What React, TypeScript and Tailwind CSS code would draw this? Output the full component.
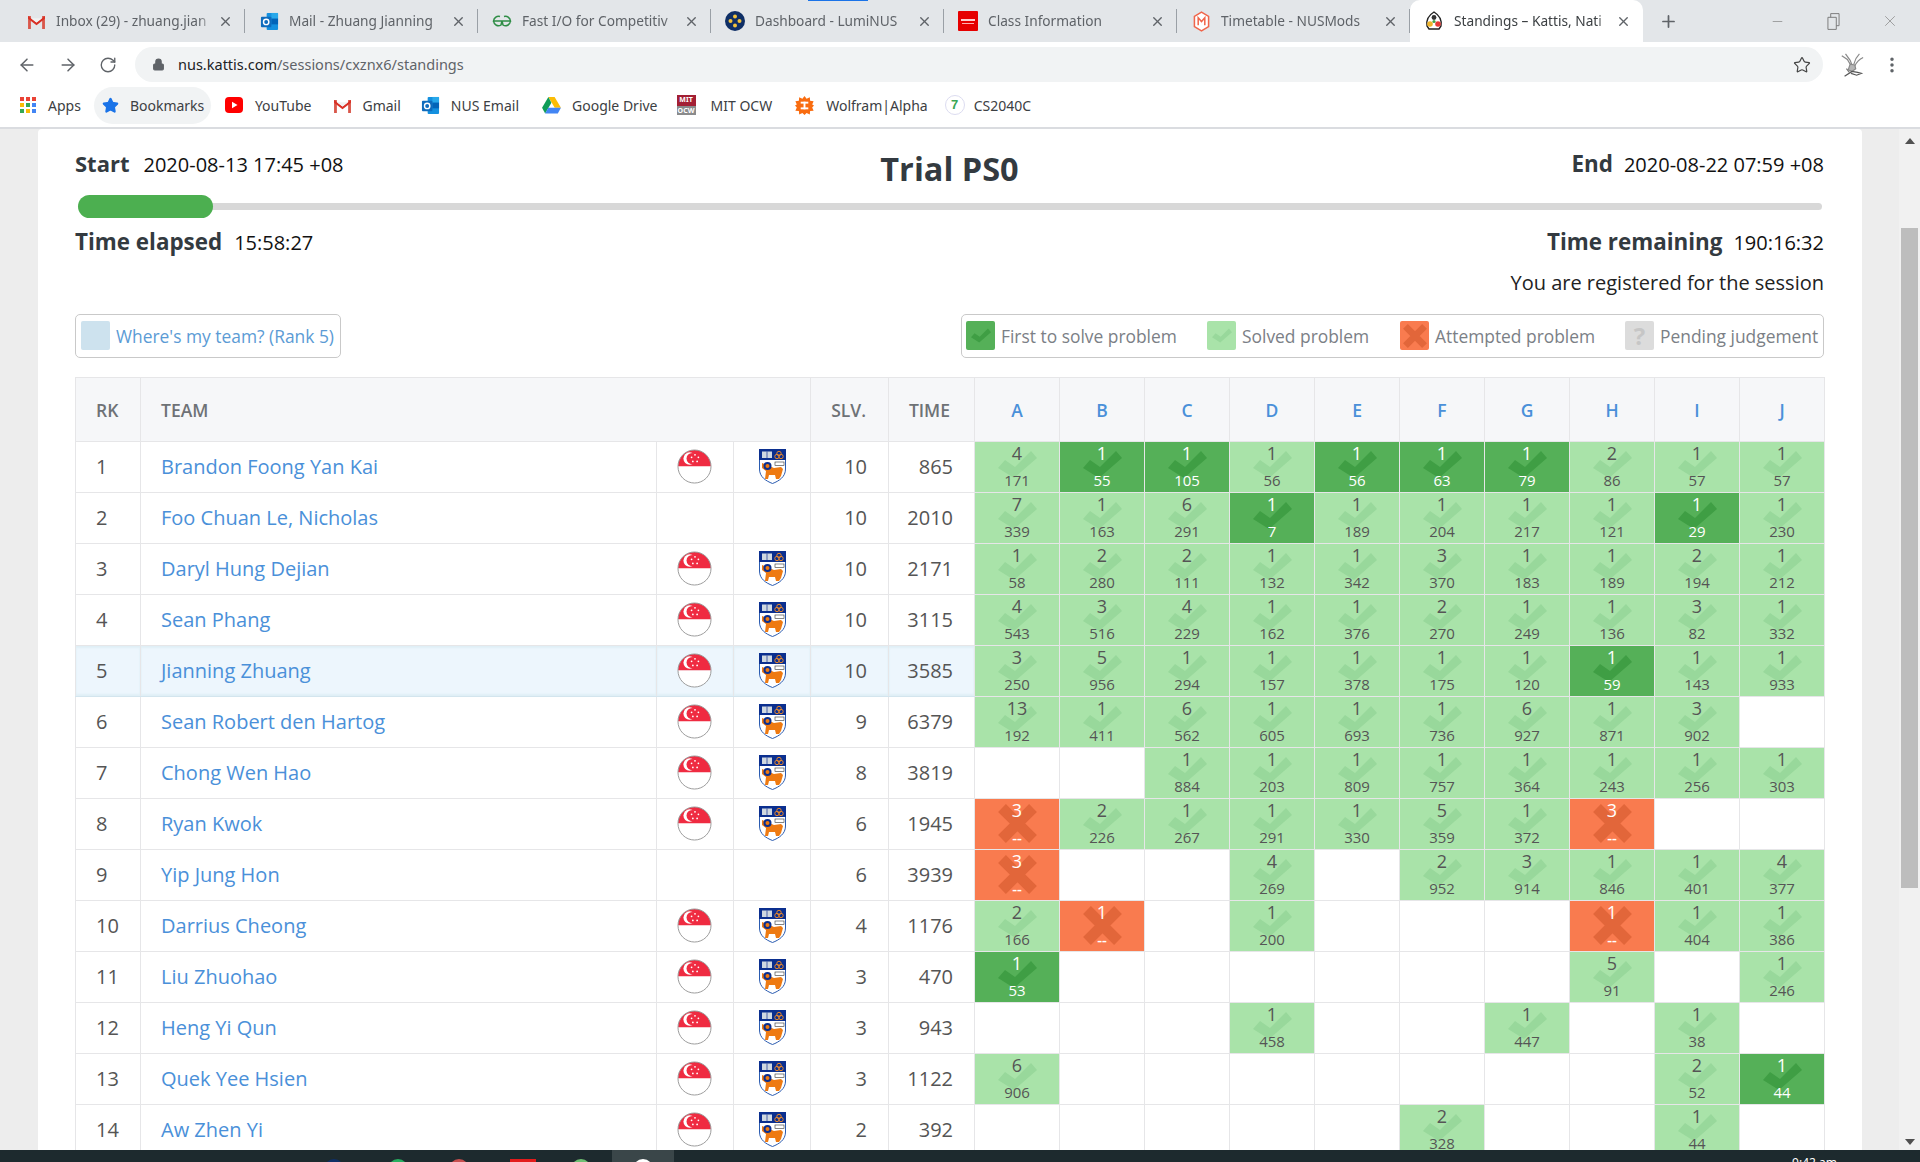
import { ArrowLeft, ArrowRight, RotateCw, Lock, Star, Plus, X, Minus, MoreVertical } from 'lucide-react';

const FONT = "font-['Open_Sans',sans-serif]";
const COLS = ['A', 'B', 'C', 'D', 'E', 'F', 'G', 'H', 'I', 'J'];

// '' = not tried, 'a/b' = solved, '*a/b' = first, 'x3' = attempted
const ROWS: [number, string, boolean, number, number, string][] = [
  [1, 'Brandon Foong Yan Kai', true, 10, 865, '4/171 *1/55 *1/105 1/56 *1/56 *1/63 *1/79 2/86 1/57 1/57'],
  [2, 'Foo Chuan Le, Nicholas', false, 10, 2010, '7/339 1/163 6/291 *1/7 1/189 1/204 1/217 1/121 *1/29 1/230'],
  [3, 'Daryl Hung Dejian', true, 10, 2171, '1/58 2/280 2/111 1/132 1/342 3/370 1/183 1/189 2/194 1/212'],
  [4, 'Sean Phang', true, 10, 3115, '4/543 3/516 4/229 1/162 1/376 2/270 1/249 1/136 3/82 1/332'],
  [5, 'Jianning Zhuang', true, 10, 3585, '3/250 5/956 1/294 1/157 1/378 1/175 1/120 *1/59 1/143 1/933'],
  [6, 'Sean Robert den Hartog', true, 9, 6379, '13/192 1/411 6/562 1/605 1/693 1/736 6/927 1/871 3/902 -'],
  [7, 'Chong Wen Hao', true, 8, 3819, '- - 1/884 1/203 1/809 1/757 1/364 1/243 1/256 1/303'],
  [8, 'Ryan Kwok', true, 6, 1945, 'x3 2/226 1/267 1/291 1/330 5/359 1/372 x3 - -'],
  [9, 'Yip Jung Hon', false, 6, 3939, 'x3 - - 4/269 - 2/952 3/914 1/846 1/401 4/377'],
  [10, 'Darrius Cheong', true, 4, 1176, '2/166 x1 - 1/200 - - - x1 1/404 1/386'],
  [11, 'Liu Zhuohao', true, 3, 470, '*1/53 - - - - - - 5/91 - 1/246'],
  [12, 'Heng Yi Qun', true, 3, 943, '- - - 1/458 - - 1/447 - 1/38 -'],
  [13, 'Quek Yee Hsien', true, 3, 1122, '6/906 - - - - - - - 2/52 *1/44'],
  [14, 'Aw Zhen Yi', true, 2, 392, '- - - - - 2/328 - - 1/44 -'],
];

function CheckMark({ className }: { className: string }) {
  return (
    <svg viewBox="0 0 39 27" className={className}>
      <polygon points="0,17 7,9 17,16 33,0 39,7 16,27" fill="currentColor" />
    </svg>
  );
}

function CrossMark({ className }: { className: string }) {
  return (
    <svg viewBox="0 0 39 39" className={className}>
      <path d="M4 4L35 35M35 4L4 35" stroke="currentColor" strokeWidth="11" fill="none" />
    </svg>
  );
}

function Flag() {
  return (
    <svg viewBox="0 0 36 36" className="w-[35px] h-[35px] ml-[20px] block">
      <path d="M1 18a17 17 0 0 1 34 0z" fill="#ef2b41" />
      <path d="M1 18a17 17 0 0 0 34 0z" fill="#fff" />
      <circle cx="18" cy="18" r="17" fill="none" stroke="#9a9a9a" strokeWidth="1" />
      <circle cx="13" cy="9.8" r="6.4" fill="#fff" />
      <circle cx="15.6" cy="9.8" r="5.8" fill="#ef2b41" />
      <g fill="#fff">
        <circle cx="18.5" cy="6" r="0.9" />
        <circle cx="22" cy="8.6" r="0.9" />
        <circle cx="20.7" cy="12.8" r="0.9" />
        <circle cx="16.3" cy="12.8" r="0.9" />
        <circle cx="15" cy="8.6" r="0.9" />
      </g>
    </svg>
  );
}

function Crest() {
  return (
    <svg viewBox="0 0 27 35" className="w-[27px] h-[35px] mx-auto block">
      <path d="M0.5 0.5H26.5V20C26.5 28 20 32 13.5 34.5C7 32 0.5 28 0.5 20Z" fill="#fff" stroke="#2a5bb0" strokeWidth="1" />
      <rect x="0" y="0" width="27" height="11" fill="#0b2f8f" />
      <rect x="3" y="2.5" width="10" height="6.5" fill="#cfd8e0" />
      <path d="M8 2.5V9" stroke="#0b2f8f" strokeWidth="0.7" />
      <circle cx="20" cy="4.5" r="2.2" fill="none" stroke="#e8862a" strokeWidth="1" />
      <circle cx="18" cy="7.5" r="2.2" fill="none" stroke="#e8862a" strokeWidth="1" />
      <circle cx="22" cy="7.5" r="2.2" fill="none" stroke="#e8862a" strokeWidth="1" />
      <path d="M3 14L8 16L15 19L22 18L24 20L22 27L20 30H17L16 26H10L9 30H6L7 22L3 19Z" fill="#ee7a12" />
      <circle cx="8.5" cy="17" r="4" fill="#0b2f8f" />
      <circle cx="8.5" cy="17" r="2" fill="#ee7a12" />
      <rect x="16" y="13" width="9" height="3.5" fill="#fff" stroke="#333" strokeWidth="0.6" />
    </svg>
  );
}

function Cell({ value }: { value: string }) {
  if (value === '-') return <td className="p-0 border border-[#e6e6e8]" />;
  const attempted = value[0] === 'x';
  const first = value[0] === '*';
  const [tries, time] = attempted ? [value.slice(1), '--'] : value.replace('*', '').split('/');
  const bg = attempted ? 'bg-[#f97b4f]' : first ? 'bg-[#55b058]' : 'bg-[#a9e3a9]';
  const text = attempted || first ? 'text-white' : 'text-[#555555]';
  return (
    <td className={`p-0 border border-[#e6e6e8] ${bg}`}>
      <div className={`relative h-[50px] flex flex-col items-center ${text}`}>
        <div className="absolute inset-0 flex items-center justify-center">
          {attempted ? (
            <CrossMark className="w-[39px] h-[39px] text-[#e2663a]" />
          ) : (
            <CheckMark className={`w-[39px] h-[27px] mb-[4px] ${first ? 'text-[#3f9e44]' : 'text-[#98d89b]'}`} />
          )}
        </div>
        <span className="relative text-[18px] leading-[24px] mt-[-1px]">{tries}</span>
        <span className={`relative text-[15px] leading-[20px] mt-[5px] ${attempted ? 'font-semibold' : ''}`}>{time}</span>
      </div>
    </td>
  );
}

function Row({ rank, name, flags, solved, time, cells }: { rank: number; name: string; flags: boolean; solved: number; time: number; cells: string }) {
  const mine = rank === 5;
  const base = `p-0 border text-[20px] ${mine ? 'bg-[#edf6fd] border-[#e6e6e8] border-y-[#d3e5ee] shadow-[inset_0_2px_2px_#e0eff6,inset_0_-2px_2px_#e0eff6]' : 'border-[#e6e6e8]'}`;
  return (
    <tr className="h-[51px]">
      <td className={`${base} pl-[20px] text-[#555555]`}>{rank}</td>
      <td className={`${base} pl-[20px] text-[#4a90d9]`}>{name}</td>
      <td className={base}>{flags && <Flag />}</td>
      <td className={base}>{flags && <Crest />}</td>
      <td className={`${base} text-right pr-[21px] text-[#555555]`}>{solved}</td>
      <td className={`${base} text-right pr-[21px] text-[#555555]`}>{time}</td>
      {cells.split(' ').map((c, i) => (
        <Cell key={i} value={c} />
      ))}
    </tr>
  );
}

function Standings() {
  const head = 'p-0 pt-[3px] border border-[#e6e6e8] text-[17.5px] font-semibold text-[#6e7276]';
  return (
    <table className="w-[1749px] table-fixed border-collapse rounded-t-[4px]">
      <colgroup>
        <col className="w-[65px]" />
        <col className="w-[516px]" />
        <col className="w-[77px]" />
        <col className="w-[77px]" />
        <col className="w-[78px]" />
        <col className="w-[86px]" />
        {COLS.map((c) => (
          <col key={c} className="w-[85px]" />
        ))}
      </colgroup>
      <thead>
        <tr className="h-[64px] bg-[#f6f7f9]">
          <th className={`${head} text-left pl-[20px]`}>RK</th>
          <th colSpan={3} className={`${head} text-left pl-[20px]`}>TEAM</th>
          <th className={`${head} text-right pr-[22px]`}>SLV.</th>
          <th className={`${head} text-right pr-[24px]`}>TIME</th>
          {COLS.map((c) => (
            <th key={c} className="p-0 pt-[3px] border border-[#e6e6e8] text-[17.5px] font-semibold text-[#4a90d9]">{c}</th>
          ))}
        </tr>
      </thead>
      <tbody>
        {ROWS.map(([rank, name, flags, solved, time, cells]) => (
          <Row key={rank} rank={rank} name={name} flags={flags} solved={solved} time={time} cells={cells} />
        ))}
      </tbody>
    </table>
  );
}

function Swatch({ className, children }: { className: string; children?: React.ReactNode }) {
  return <div className={`w-[29px] h-[29px] rounded-[2px] flex items-center justify-center shrink-0 ${className}`}>{children}</div>;
}

function SessionHeader() {
  return (
    <>
      <div className="flex items-center justify-between h-[60px] pt-[9px] relative">
        <div className="flex items-baseline gap-[14px] text-[#111]">
          <b className="text-[22px] text-[#333a40]">Start</b>
          <span className="text-[20px]">2020-08-13 17:45 +08</span>
        </div>
        <h1 className="absolute left-0 right-0 top-[16px] text-center text-[32.5px] font-bold text-[#333a40]">Trial PS0</h1>
        <div className="flex items-baseline gap-[11px] text-[#111]">
          <b className="text-[22.4px] text-[#333a40]">End</b>
          <span className="text-[20px]">2020-08-22 07:59 +08</span>
        </div>
      </div>
      <div className="relative h-[7px] mx-[3px] mt-[14px] mr-[2px] bg-[#d8d8d8] rounded-full">
        <div className="absolute left-0 top-[-8px] h-[23px] w-[135px] bg-[#4caf50] rounded-full" />
      </div>
      <div className="flex items-baseline justify-between mt-[15px]">
        <div className="flex items-baseline gap-[12px] text-[#111]">
          <b className="text-[22.4px] text-[#333a40]">Time elapsed</b>
          <span className="text-[20px]">15:58:27</span>
        </div>
        <div className="flex items-baseline gap-[11px] text-[#111]">
          <b className="text-[22.4px] text-[#333a40]">Time remaining</b>
          <span className="text-[20px]">190:16:32</span>
        </div>
      </div>
      <p className="text-right text-[20px] text-[#222] mt-[10px] leading-[28px]">You are registered for the session</p>
    </>
  );
}

function Legend() {
  const label = 'text-[17.4px] text-[#7b8086] ml-[6px]';
  return (
    <div className="flex justify-between mt-[17px] mb-[19px]">
      <div className="flex items-center h-[44px] w-[266px] border border-[#c9c9c9] rounded-[5px] px-[5px]">
        <Swatch className="bg-[#cde2ee]" />
        <span className="text-[17.4px] text-[#5b9bd5] ml-[6px] whitespace-nowrap">Where's my team? (Rank 5)</span>
      </div>
      <div className="flex items-center h-[44px] w-[863px] border border-[#c9c9c9] rounded-[5px] pl-[4px]">
        <Swatch className="bg-[#55b058]"><CheckMark className="w-[20px] h-[15px] text-[#3f9e44]" /></Swatch>
        <span className={`${label} w-[206px]`}>First to solve problem</span>
        <Swatch className="bg-[#a9e3a9]"><CheckMark className="w-[20px] h-[15px] text-[#98d89b]" /></Swatch>
        <span className={`${label} w-[158px]`}>Solved problem</span>
        <Swatch className="bg-[#f97b4f]"><CrossMark className="w-[24px] h-[24px] text-[#e2663a]" /></Swatch>
        <span className={`${label} w-[190px]`}>Attempted problem</span>
        <Swatch className="bg-[#dcdcdc]"><span className="text-[24px] font-bold text-[#c6c6c6] leading-none">?</span></Swatch>
        <span className={`${label} whitespace-nowrap`}>Pending judgement</span>
      </div>
    </div>
  );
}

function GmailIcon() {
  return (
    <svg viewBox="0 0 20 16" className="w-[19px] h-[15px]">
      <path d="M1 16V2h3v14zM16 16V2h3v14z" fill="#d9574a" />
      <path d="M1 2l9 7 9-7v3l-9 7-9-7z" fill="#d93025" />
      <path d="M4 4.5l6 4.5 6-4.5" fill="#f1f1f1" />
    </svg>
  );
}

function OutlookIcon() {
  return (
    <svg viewBox="0 0 20 20" className="w-[19px] h-[19px]">
      <rect x="7" y="1" width="12" height="18" rx="1" fill="#1490df" />
      <rect x="12" y="1" width="7" height="6" fill="#28a8ea" />
      <rect x="12" y="7" width="7" height="6" fill="#0364b8" />
      <rect x="1" y="5" width="11" height="11" rx="1" fill="#0f6cbd" />
      <circle cx="6.5" cy="10.5" r="2.8" fill="none" stroke="#fff" strokeWidth="1.5" />
    </svg>
  );
}

function GfgIcon() {
  return (
    <svg viewBox="0 0 20 14" className="w-[20px] h-[14px]" fill="none" stroke="#2f8d46" strokeWidth="1.5">
      <path d="M10 7H1.5C2 3.5 5 1.5 8 2.5M1.5 7C2 11 6 13 9 11L10 7" />
      <path d="M10 7h8.5C18 3.5 15 1.5 12 2.5M18.5 7C18 11 14 13 11 11L10 7" />
    </svg>
  );
}

function LuminusIcon() {
  return (
    <svg viewBox="0 0 20 20" className="w-[20px] h-[20px]">
      <circle cx="10" cy="10" r="10" fill="#0f2f66" />
      <circle cx="10" cy="5.5" r="2" fill="#f3c33c" />
      <circle cx="5.5" cy="10" r="2" fill="#f3c33c" />
      <circle cx="14.5" cy="10" r="2" fill="#f3c33c" />
      <circle cx="10" cy="14.5" r="2" fill="#f3c33c" />
    </svg>
  );
}

function OracleIcon() {
  return (
    <div className="w-[20px] h-[20px] bg-[#e60000] rounded-[1px] flex flex-col items-center justify-center">
      <div className="w-[14px] h-[2px] bg-[#ffd0d0]" />
      <div className="w-[12px] h-[1px] bg-[#ffb0b0] mt-[2px]" />
    </div>
  );
}

function NusModsIcon() {
  return (
    <svg viewBox="0 0 18 22" className="w-[17px] h-[21px]">
      <path d="M9 1l7.5 4.5v11L9 21l-7.5-4.5v-11z" fill="#fff" stroke="#f0654a" strokeWidth="1.6" />
      <path d="M5.5 15V7L9 11l3.5-4v8" fill="none" stroke="#f0654a" strokeWidth="1.6" />
    </svg>
  );
}

function KattisIcon() {
  return (
    <svg viewBox="0 0 20 20" className="w-[20px] h-[20px]">
      <path d="M10 1C5 4 2 9 3 15l2 3h10l2-3c1-6-2-11-7-14z" fill="#fff" stroke="#222" strokeWidth="1.4" />
      <circle cx="10" cy="6.5" r="2.4" fill="#333" />
      <circle cx="6" cy="13" r="2.8" fill="#f0b429" />
      <circle cx="14" cy="13" r="2.8" fill="#e53935" />
      <circle cx="10" cy="10.5" r="1.6" fill="#43a047" />
    </svg>
  );
}

function AppsIcon() {
  const dots = ['#ea4335', '#ea4335', '#ea4335', '#fbbc05', '#34a853', '#4285f4', '#34a853', '#fbbc05', '#4285f4'];
  return (
    <div className="grid grid-cols-3 gap-[2px] w-[16px]">
      {dots.map((c, i) => (
        <svg key={i} viewBox="0 0 4 4" className="w-[4px] h-[4px]"><rect width="4" height="4" fill={c} /></svg>
      ))}
    </div>
  );
}

function YoutubeIcon() {
  return (
    <svg viewBox="0 0 18 16" className="w-[18px] h-[16px]">
      <rect width="18" height="16" rx="4" y="0" fill="#f00" />
      <path d="M7 4.8L12.5 8 7 11.2z" fill="#fff" />
    </svg>
  );
}

function DriveIcon() {
  return (
    <svg viewBox="0 0 20 18" className="w-[19px] h-[17px]">
      <path d="M6.7 0h6.6L20 11.5h-6.6z" fill="#fbbc05" />
      <path d="M6.7 0L0 11.5l3.3 6 6.6-11.5z" fill="#0f9d58" />
      <path d="M6.6 11.5H20l-3.3 6H3.3z" fill="#4285f4" />
    </svg>
  );
}

function MitIcon() {
  return (
    <div className="w-[19px] h-[20px] flex flex-col text-[7px] font-bold leading-[9px] text-center">
      <span className="bg-[#a31f34] text-white h-[11px]">MIT</span>
      <span className="bg-[#8a8b8c] text-white h-[9px]">OCW</span>
    </div>
  );
}

function WolframIcon() {
  return (
    <svg viewBox="0 0 20 20" className="w-[19px] h-[19px]">
      <path d="M10 0l2.2 3 3.4-1.6.3 3.7 3.7.3L18.1 9l1.9 1-1.9 2 1.5 3.6-3.7.3-.3 3.7-3.4-1.6L10 20l-2.2-2-3.4 1.6-.3-3.7-3.7-.3L1.9 12 0 10l1.9-1L.4 5.4l3.7-.3.3-3.7 3.4 1.6z" fill="#f96c10" />
      <rect x="6" y="6" width="8" height="2" fill="#fff" />
      <rect x="6" y="12" width="8" height="2" fill="#fff" />
      <rect x="9" y="6" width="2" height="8" fill="#fff" />
    </svg>
  );
}

function SevenIcon() {
  return (
    <div className="w-[20px] h-[20px] rounded-full border border-[#dcdcf0] bg-white flex items-center justify-center text-[13px] font-bold text-[#3aa655] font-['Liberation_Sans',sans-serif]">7</div>
  );
}

function EagleIcon() {
  return (
    <svg viewBox="0 0 28 28" className="w-[26px] h-[26px]" fill="none" stroke="#8a8a8a" strokeWidth="1.3">
      <path d="M3 4l6 4 3 5M7 2l5 7 2 5M22 2c-3 3-5 7-6 11M26 6c-4 2-7 5-9 9" />
      <path d="M12 13l5 1 1 4-4 3-4-2z" fill="#b5b5b5" />
      <path d="M6 26l8-5 6 1 4 1-5 2-6-2" stroke="#555" />
      <path d="M8 18l4 5" stroke="#777" />
    </svg>
  );
}

function Tab({ title, icon, active }: { title: string; icon: React.ReactNode; active?: boolean }) {
  return (
    <div className={`relative w-[233px] h-[42px] shrink-0 flex items-center pl-[14px] pr-[12px] ${active ? 'bg-white rounded-t-[10px] text-[#3c4043]' : 'text-[#5f6368]'}`}>
      <div className="w-[20px] flex justify-center shrink-0">{icon}</div>
      <span className="ml-[10px] w-[158px] pt-[1px] text-[13.7px] whitespace-nowrap overflow-hidden [mask-image:linear-gradient(to_right,black_90%,transparent)]">{title}</span>
      <X className="ml-auto w-[15px] h-[15px] text-[#5f6368]" strokeWidth={2.2} />
      {!active && <div className="absolute right-0 top-[9px] h-[24px] w-px bg-[#9aa0a6]" />}
    </div>
  );
}

function BookmarkItem({ icon, label, className }: { icon: React.ReactNode; label: string; className: string }) {
  return (
    <div className={`flex items-center h-[37px] whitespace-nowrap ${className}`}>
      {icon}
      <span className="text-[14px] text-[#3c4043]">{label}</span>
    </div>
  );
}

function BrowserChrome() {
  return (
    <div className="shrink-0 relative font-['Noto_Sans',sans-serif]">
      <div className="absolute left-[808px] top-0 w-[60px] h-[1px] bg-[#1a73e8]" />
      <div className="h-[42px] bg-[#e3e6e9] flex pl-[12px] items-center">
        <Tab title="Inbox (29) - zhuang.jian" icon={<GmailIcon />} />
        <Tab title="Mail - Zhuang Jianning" icon={<OutlookIcon />} />
        <Tab title="Fast I/O for Competitiv" icon={<GfgIcon />} />
        <Tab title="Dashboard - LumiNUS" icon={<LuminusIcon />} />
        <Tab title="Class Information" icon={<OracleIcon />} />
        <Tab title="Timetable - NUSMods" icon={<NusModsIcon />} />
        <Tab title="Standings – Kattis, Nati" icon={<KattisIcon />} active />
        <Plus className="ml-[16px] w-[19px] h-[19px] text-[#5f6368]" strokeWidth={2.2} />
        <Minus className="ml-[92px] w-[15px] h-[15px] text-[#777]" strokeWidth={1} />
        <svg viewBox="0 0 14 18" className="ml-[42px] w-[13px] h-[17px] text-[#777]" fill="none" stroke="currentColor">
          <path d="M1 4.5h9v13H1zM4 4.5V.5h9v13h-3" />
        </svg>
        <X className="ml-[41px] w-[18px] h-[18px] text-[#888]" strokeWidth={1} />
      </div>
      <div className="h-[43px] pt-[2px] bg-white flex items-center">
        <ArrowLeft className="ml-[17px] w-[20px] h-[20px] text-[#5f6368]" strokeWidth={1.8} />
        <ArrowRight className="ml-[21px] w-[20px] h-[20px] text-[#5f6368]" strokeWidth={1.8} />
        <RotateCw className="ml-[21px] w-[18px] h-[18px] text-[#5f6368]" strokeWidth={1.8} />
        <div className="ml-[18px] w-[1688px] h-[35px] bg-[#f1f3f4] rounded-full flex items-center pl-[17px] pr-[12px]">
          <Lock className="w-[13px] h-[13px] text-[#5f6368] fill-[#5f6368]" />
          <span className="ml-[13px] text-[14.5px] text-[#202124]">
            nus.kattis.com<span className="text-[#5f6368]">/sessions/cxznx6/standings</span>
          </span>
          <Star className="ml-auto w-[18px] h-[18px] text-[#444]" strokeWidth={1.6} />
        </div>
        <div className="ml-[16px]"><EagleIcon /></div>
        <MoreVertical className="ml-[17px] w-[20px] h-[20px] text-[#5f6368]" strokeWidth={2.2} />
      </div>
      <div className="h-[42px] pb-[2px] bg-white flex items-center pl-[20px]">
        <BookmarkItem icon={<AppsIcon />} label="Apps" className="gap-[12px]" />
        <BookmarkItem icon={<Star className="w-[17px] h-[17px] text-[#1a73e8] fill-[#1a73e8]" />} label="Bookmarks" className="ml-[13px] w-[117px] pl-[8px] gap-[11px] bg-[#f1f3f4] rounded-full" />
        <BookmarkItem icon={<YoutubeIcon />} label="YouTube" className="ml-[14px] gap-[12px]" />
        <BookmarkItem icon={<GmailIcon />} label="Gmail" className="ml-[22px] gap-[10px]" />
        <BookmarkItem icon={<OutlookIcon />} label="NUS Email" className="ml-[20px] gap-[11px]" />
        <BookmarkItem icon={<DriveIcon />} label="Google Drive" className="ml-[23px] gap-[11px]" />
        <BookmarkItem icon={<MitIcon />} label="MIT OCW" className="ml-[19px] gap-[15px]" />
        <BookmarkItem icon={<WolframIcon />} label="Wolfram|Alpha" className="ml-[23px] gap-[12px]" />
        <BookmarkItem icon={<SevenIcon />} label="CS2040C" className="ml-[17px] gap-[9px]" />
      </div>
      <div className="h-[2px] bg-[#dadce0]" />
    </div>
  );
}

function Scrollbar() {
  return (
    <div className="w-[21px] shrink-0 bg-[#f1f1f1] flex flex-col items-center">
      <div className="mt-[9px] w-0 h-0 border-x-[5px] border-x-transparent border-b-[6px] border-b-[#505050]" />
      <div className="mt-[84px] w-[17px] h-[660px] bg-[#bdbdbd]" />
      <div className="mt-auto mb-[5px] w-0 h-0 border-x-[5px] border-x-transparent border-t-[6px] border-t-[#505050]" />
    </div>
  );
}

function Taskbar() {
  return (
    <div className="h-[12px] shrink-0 bg-[#1d2a2e] flex items-start overflow-hidden">
      <div className="ml-[324px] mt-[9px] w-[20px] h-[20px] rounded-full bg-[#0f2f66]" />
      <div className="ml-[44px] mt-[9px] w-[20px] h-[20px] rounded-full bg-[#27ae60]" />
      <div className="ml-[41px] mt-[9px] w-[20px] h-[20px] rounded-full bg-[#c94f4f]" />
      <div className="ml-[41px] mt-[9px] w-[26px] h-[20px] bg-[#e31b1b]" />
      <div className="ml-[35px] mt-[9px] w-[20px] h-[20px] rounded-full bg-[#6fbf73]" />
      <div className="ml-[21px] w-[62px] h-[12px] bg-[#3a4649] flex justify-center">
        <div className="mt-[9px] w-[20px] h-[20px] rounded-full bg-white" />
      </div>
      <span className="ml-auto mr-[83px] mt-[5px] text-[12px] leading-[16px] text-white font-['Noto_Sans',sans-serif]">9:42 am</span>
    </div>
  );
}

export default function App() {
  return (
    <div className={`h-[1162px] w-[1920px] overflow-hidden flex flex-col ${FONT}`}>
      <BrowserChrome />
      <div className="flex-1 min-h-0 flex overflow-hidden">
        <div className="flex-1 bg-[#ededed] pl-[38px] pr-[37px]">
          <div className="w-[1824px] h-full bg-white rounded-t-[4px] pl-[37px] pr-[38px] overflow-hidden">
            <SessionHeader />
            <Legend />
            <Standings />
          </div>
        </div>
        <Scrollbar />
      </div>
      <Taskbar />
    </div>
  );
}
